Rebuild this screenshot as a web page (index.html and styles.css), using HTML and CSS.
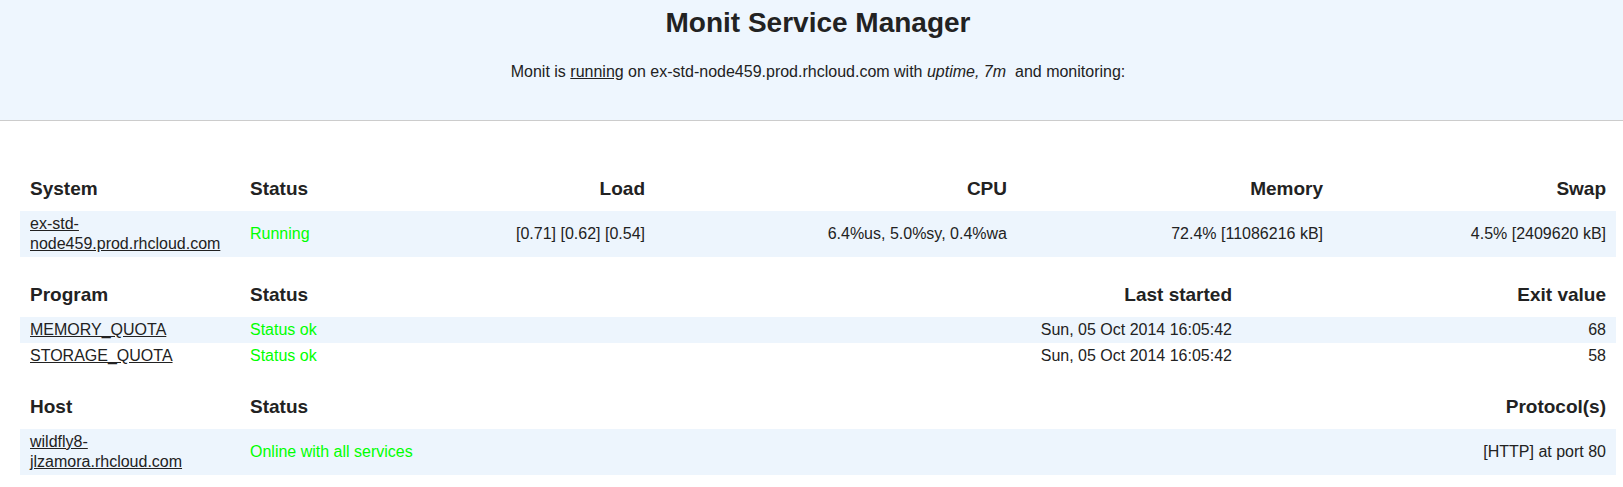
FILE: index.html
```html
<!DOCTYPE html>
<html>
<head>
<meta charset="utf-8">
<title>Monit Service Manager</title>
<link rel="stylesheet" href="styles.css">
</head>
<body>
<div class="header">
  <div class="wrap">
    <h1 class="title">Monit Service Manager</h1>
    <p class="intro">Monit is <a href="#">running</a> on ex-std-node459.prod.rhcloud.com with <i>uptime, 7m</i>&nbsp; and monitoring:</p>
  </div>
</div>
<div class="wrap content">
  <table class="grid sys">
    <colgroup><col class="c1"><col class="c2"><col class="c3"><col class="c4"><col class="c5"><col class="c6"></colgroup>
    <thead>
      <tr><th class="left">System</th><th class="left">Status</th><th class="right">Load</th><th class="right">CPU</th><th class="right">Memory</th><th class="right">Swap</th></tr>
    </thead>
    <tbody>
      <tr class="stripe"><td class="left"><a href="#">ex-std-node459.prod.rhcloud.com</a></td><td class="left ok">Running</td><td class="right">[0.71]&nbsp;[0.62]&nbsp;[0.54]</td><td class="right">6.4%us,&nbsp;5.0%sy,&nbsp;0.4%wa</td><td class="right">72.4% [11086216&nbsp;kB]</td><td class="right">4.5% [2409620&nbsp;kB]</td></tr>
    </tbody>
  </table>

  <table class="grid prog">
    <colgroup><col class="c1"><col class="c2"><col class="c3"><col class="c4"></colgroup>
    <thead>
      <tr><th class="left">Program</th><th class="left">Status</th><th class="right">Last started</th><th class="right">Exit value</th></tr>
    </thead>
    <tbody>
      <tr class="stripe"><td class="left"><a href="#">MEMORY_QUOTA</a></td><td class="left ok">Status ok</td><td class="right">Sun, 05 Oct 2014 16:05:42</td><td class="right">68</td></tr>
      <tr><td class="left"><a href="#">STORAGE_QUOTA</a></td><td class="left ok">Status ok</td><td class="right">Sun, 05 Oct 2014 16:05:42</td><td class="right">58</td></tr>
    </tbody>
  </table>

  <table class="grid host">
    <colgroup><col class="c1"><col class="c2"><col class="c3"></colgroup>
    <thead>
      <tr><th class="left">Host</th><th class="left">Status</th><th class="right">Protocol(s)</th></tr>
    </thead>
    <tbody>
      <tr class="stripe"><td class="left"><a href="#">wildfly8-jlzamora.rhcloud.com</a></td><td class="left ok">Online with all services</td><td class="right">[HTTP] at port 80</td></tr>
    </tbody>
  </table>
</div>
</body>
</html>
```
FILE: styles.css
```css
html, body {
  margin: 0;
  padding: 0;
  background: #ffffff;
  color: #222222;
  font-family: "Liberation Sans", Arial, Helvetica, sans-serif;
  font-size: 16px;
}

a {
  color: #222222;
  text-decoration: underline;
}

.wrap {
  margin-left: 20px;
  width: 1596px;
}

.header {
  background: #eef6fe;
  border-bottom: 1px solid #cccccc;
  height: 120px;
  box-sizing: content-box;
}

.header .wrap {
  padding-top: 6px;
  text-align: center;
}

.title {
  margin: 0;
  font-size: 28px;
  line-height: 34px;
  font-weight: bold;
  color: #222222;
}

.intro {
  margin: 22px 0 0 0;
  font-size: 16px;
  line-height: 20px;
}

.content {
  padding-top: 51px;
}

.grid {
  width: 1596px;
  table-layout: fixed;
  border-collapse: collapse;
  border-spacing: 0;
  margin-bottom: 21px;
}

.grid th {
  font-size: 19px;
  line-height: 22px;
  font-weight: bold;
  padding: 6px 10px 11px 10px;
  color: #222222;
}

.grid td {
  font-size: 16px;
  line-height: 20px;
  padding: 3px 10px;
  vertical-align: middle;
}

.left { text-align: left; }
.right { text-align: right; }

.stripe td {
  background: #edf5fd;
}

.ok {
  color: #00ff00;
}

.sys .c1 { width: 220px; }
.sys .c2 { width: 200px; }
.sys .c3 { width: 215px; }
.sys .c4 { width: 362px; }
.sys .c5 { width: 316px; }
.sys .c6 { width: 283px; }

.prog .c1 { width: 220px; }
.prog .c2 { width: 200px; }
.prog .c3 { width: 802px; }
.prog .c4 { width: 374px; }

.host .c1 { width: 220px; }
.host .c2 { width: 400px; }
.host .c3 { width: 976px; }
```
